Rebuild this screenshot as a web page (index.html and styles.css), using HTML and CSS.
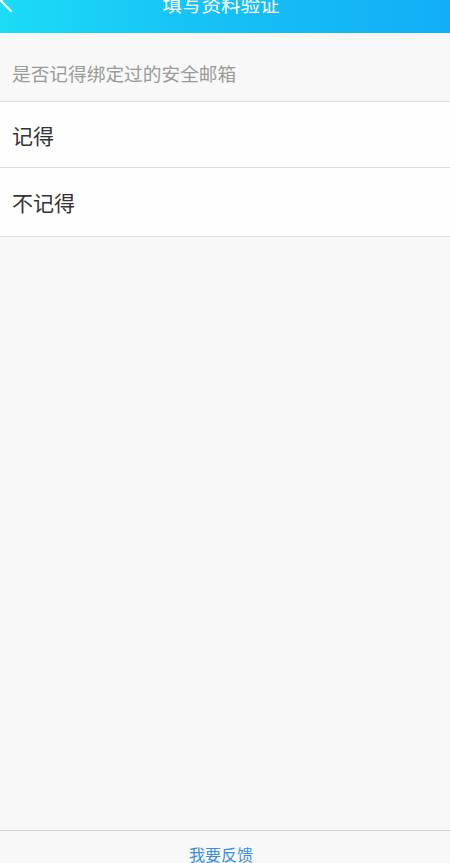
FILE: index.html
```html
<!DOCTYPE html>
<html>
  <head>
    <title>填写资料验证</title>
    <meta charset="utf-8">
    <link rel="stylesheet" href="styles.css">
  </head>
  <body>
    <div class="page">
      <div class="header">
        <svg class="back" width="16" height="30" viewBox="0 0 16 30">
          <polyline points="12,0 2,10 12,20" fill="none" stroke="#fff" stroke-width="2" stroke-linecap="round" stroke-linejoin="round"/>
        </svg>
        <div class="title">填写资料验证</div>
      </div>
      <div class="main">
        <div class="question">是否记得绑定过的安全邮箱</div>
        <div class="option option-first">记得</div>
        <div class="option">不记得</div>
      </div>
      <div class="footer">
        <a class="feedback">我要反馈</a>
      </div>
    </div>
  </body>
</html>
```

FILE: styles.css
```css
body {
  margin: 0;
  background-color: #f7f8f7;
  font-family: "Noto Sans CJK SC", "Noto Sans", sans-serif;
}
.page {
  height: 863px;
  display: flex;
  flex-direction: column;
  overflow: hidden;
}
.header {
  position: relative;
  height: 33px;
  flex-shrink: 0;
  display: flex;
  justify-content: center;
  padding-right: 8px;
  background: linear-gradient(90deg, #1cdcf6 0%, #16c2f6 45%, #12aef6 100%);
}
.back {
  position: absolute;
  left: -1px;
  top: -9px;
}
.title {
  margin-top: -8px;
  font-size: 19.5px;
  line-height: 24px;
  color: #fff;
}
.main {
  flex: 1;
}
.question {
  padding: 28px 12px 16px;
  font-size: 18.7px;
  line-height: 24px;
  color: #9a9a9a;
  border-bottom: 1px solid #dcdcdc;
}
.option {
  height: 68px;
  padding: 0 12px;
  display: flex;
  align-items: center;
  font-size: 21px;
  color: #333;
  background-color: #fdfefd;
  border-bottom: 1px solid #dcdcdc;
}
.option-first {
  height: 65px;
}
.footer {
  height: 32px;
  flex-shrink: 0;
  padding-right: 8px;
  border-top: 1px solid #d2d2d2;
  text-align: center;
}
.feedback {
  display: inline-block;
  padding-top: 13px;
  font-size: 16px;
  line-height: 20px;
  color: #3a8ee0;
}
```
